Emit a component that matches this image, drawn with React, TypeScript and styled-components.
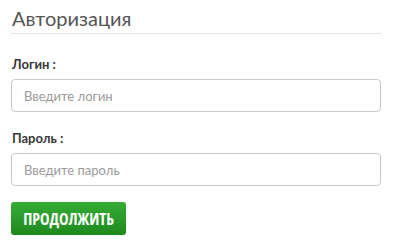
import React from "react";
import styled, { createGlobalStyle } from "styled-components";

const Global = createGlobalStyle`
  html, body { margin: 0; padding: 0; background: #fff; }
  body { font-family: Lato, "Open Sans", sans-serif; }
  * { box-sizing: border-box; }
`;

const Form = styled.form`
  width: 370px;
  margin-left: 11px;
  display: flex;
  flex-direction: column;
`;

const Title = styled.h2`
  margin: 0;
  padding: 5px 0 1px 1px;
  font-size: 20px;
  line-height: 27px;
  font-weight: 400;
  color: #555;
  border-bottom: 1px solid #e2e2e2;
`;

const Field = styled.div<{ $top: number }>`
  display: flex;
  flex-direction: column;
  gap: 6px;
  margin-top: ${(p) => p.$top}px;
`;

const Label = styled.label`
  padding-left: 1px;
  font-size: 13px;
  line-height: 18px;
  font-weight: 700;
  color: #383838;
`;

const Input = styled.input`
  width: 100%;
  height: 33px;
  border: 1px solid #c9c9c9;
  border-radius: 4px;
  padding: 0 12px;
  font-family: Lato, "Open Sans", sans-serif;
  font-size: 13px;
  color: #333;
  outline: none;
  &::placeholder { color: #9a9a9a; }
`;

const Button = styled.button`
  margin-top: 16px;
  align-self: flex-start;
  width: 115px;
  height: 33px;
  padding: 0;
  border: none;
  border-radius: 3px;
  background: linear-gradient(#35ac35, #1e891e);
  color: #fff;
  font-family: "Open Sans Condensed", "Roboto Condensed", sans-serif;
  font-weight: 700;
  font-size: 16px;
  cursor: pointer;
`;

export default function App() {
  return (
    <>
      <Global />
      <Form onSubmit={(e) => e.preventDefault()}>
        <Title>Авторизация</Title>
        <Field $top={21}>
          <Label>Логин :</Label>
          <Input placeholder="Введите логин" />
        </Field>
        <Field $top={17}>
          <Label>Пароль :</Label>
          <Input type="password" placeholder="Введите пароль" />
        </Field>
        <Button type="submit">ПРОДОЛЖИТЬ</Button>
      </Form>
    </>
  );
}
